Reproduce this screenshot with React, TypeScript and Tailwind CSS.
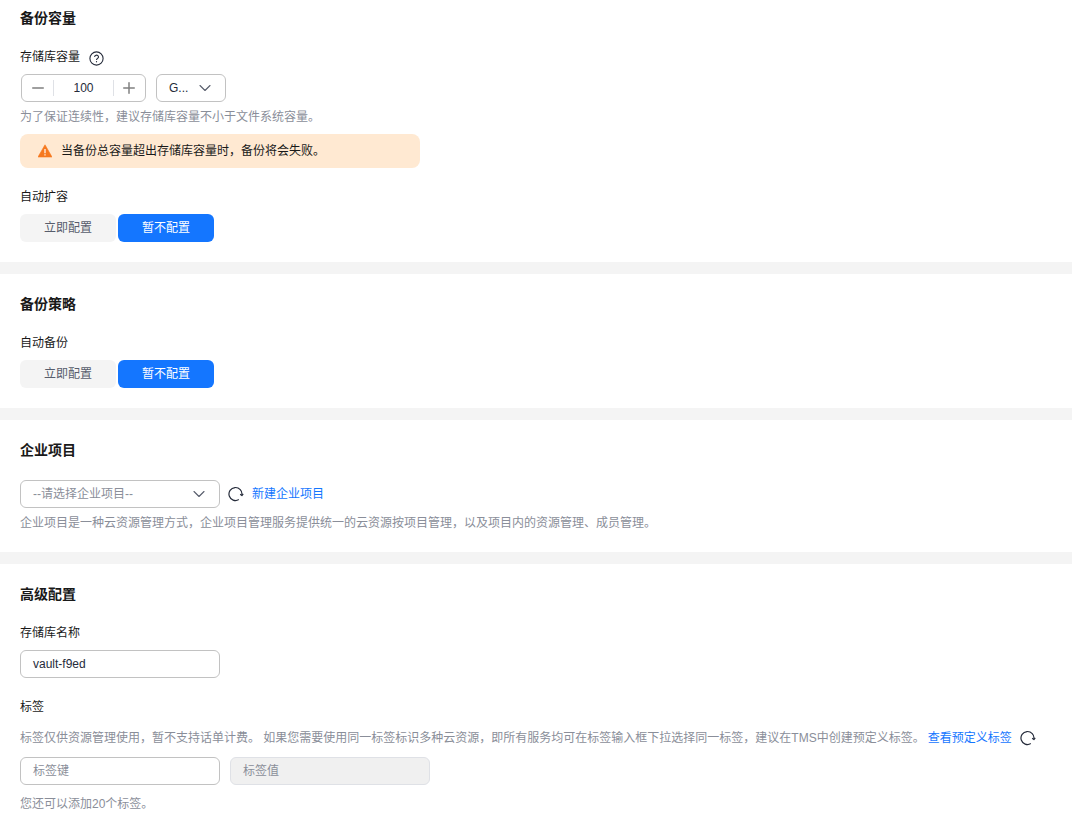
import { ChevronDown, Minus, Plus } from 'lucide-react';

const font = "font-['Liberation_Sans','Noto_Sans_CJK_SC',sans-serif]";

function Refresh() {
    return (
        <svg width="16" height="16" viewBox="0 0 16 16" fill="none" stroke="#252b3a" strokeWidth="1.2" className="shrink-0">
            <path d="M10.8 13.6A6.5 6.5 0 1 1 13.9 9" />
            <path d="M15.2 7.8 13.9 9.6 12.2 8.2" strokeLinejoin="round" />
        </svg>
    );
}

function ConfigToggle() {
    return (
        <div className="flex gap-0.5 h-7 text-xs">
            <div className="w-24 rounded-md bg-[#f4f4f4] text-[#575d6c] flex items-center justify-center">立即配置</div>
            <div className="w-24 rounded-md bg-[#1476ff] text-white flex items-center justify-center">暂不配置</div>
        </div>
    );
}

function SectionTitle({ children }: { children: string }) {
    return <h2 className="text-sm leading-5 font-bold text-[#191919]">{children}</h2>;
}

function Field({ className, children }: { className: string; children: string }) {
    return (
        <div className={`w-[200px] h-7 rounded-md px-3 flex items-center text-xs ${className}`}>{children}</div>
    );
}

export default function App() {
    return (
        <div className={`${font} w-[1072px] h-[829px] overflow-hidden bg-[#f4f4f4] flex flex-col gap-3 text-xs text-[#191919]`}>
            {/* 备份容量 */}
            <section className="bg-white h-[262px] px-5 pt-2">
                <SectionTitle>备份容量</SectionTitle>
                <div className="mt-[21px] flex items-center h-4 gap-[9px]">
                    <span>存储库容量</span>
                    <svg width="15" height="15" viewBox="0 0 15 15" fill="none" stroke="#252b3a" strokeWidth="1.1" className="mt-0.5">
                        <circle cx="7.5" cy="7.5" r="6.6" />
                        <path d="M5.6 6c0-2.5 3.9-2.5 3.9-.1 0 1.4-2 1.5-2 3.1" />
                        <path d="M7.5 10.1v1.2" />
                    </svg>
                </div>
                <div className="mt-[9px] flex">
                    <div className="ml-px w-[125px] h-7 rounded-md border border-[#c2c2c2] flex items-center">
                        <div className="w-[32px] h-4 border-r border-[#dfe1e6] flex items-center justify-center">
                            <Minus size={18} strokeWidth={2} color="#808080" />
                        </div>
                        <div className="flex-1 text-center text-[#252b3a]">100</div>
                        <div className="w-[32px] h-4 border-l border-[#dfe1e6] pr-0.5 flex items-center justify-center">
                            <Plus size={18} strokeWidth={2} color="#808080" />
                        </div>
                    </div>
                    <div className="ml-2.5 w-[70px] h-7 rounded-md border border-[#c2c2c2] pl-3 pr-2.5 flex items-center justify-between text-[#252b3a]">
                        <span>G...</span>
                        <ChevronDown size={20} strokeWidth={1.3} color="#575d6c" />
                    </div>
                </div>
                <p className="mt-[7px] leading-4 text-[#8a8e99]">为了保证连续性，建议存储库容量不小于文件系统容量。</p>
                <div className="mt-[9px] w-[400px] h-[34px] rounded-lg bg-[#ffe9d2] pl-[18px] flex items-center gap-[9px]">
                    <svg width="14" height="14" viewBox="0 0 14 14">
                        <path d="M7 .8 14 13H0Z" fill="#f6791f" stroke="#f6791f" strokeLinejoin="round" strokeWidth="0.6" />
                        <path d="M7 5v4.2M7 10.2v1.2" stroke="#fff" strokeWidth="1.2" />
                    </svg>
                    <span>当备份总容量超出存储库容量时，备份将会失败。</span>
                </div>
                <div className="mt-[21px] leading-4">自动扩容</div>
                <div className="mt-[9px]">
                    <ConfigToggle />
                </div>
            </section>

            {/* 备份策略 */}
            <section className="bg-white h-[134px] px-5 pt-5">
                <SectionTitle>备份策略</SectionTitle>
                <div className="mt-[21px] leading-4">自动备份</div>
                <div className="mt-[9px]">
                    <ConfigToggle />
                </div>
            </section>

            {/* 企业项目 */}
            <section className="bg-white h-[132px] px-5 pt-5">
                <SectionTitle>企业项目</SectionTitle>
                <div className="mt-5 flex items-center">
                    <div className="w-[200px] h-7 rounded-md border border-[#c2c2c2] pl-3 pr-2.5 flex items-center justify-between text-[#8a8e99]">
                        <span>--请选择企业项目--</span>
                        <ChevronDown size={20} strokeWidth={1.3} color="#575d6c" />
                    </div>
                    <div className="ml-2">
                        <Refresh />
                    </div>
                    <span className="ml-2 text-[#1476ff]">新建企业项目</span>
                </div>
                <p className="mt-[7px] leading-4 text-[#8a8e99]">
                    企业项目是一种云资源管理方式，企业项目管理服务提供统一的云资源按项目管理，以及项目内的资源管理、成员管理。
                </p>
            </section>

            {/* 高级配置 */}
            <section className="bg-white flex-1 px-5 pt-5">
                <SectionTitle>高级配置</SectionTitle>
                <div className="mt-[21px] leading-4">存储库名称</div>
                <div className="mt-[9px]">
                    <Field className="border border-[#c2c2c2] text-[#252b3a]">vault-f9ed</Field>
                </div>
                <div className="mt-[21px] leading-4">标签</div>
                <div className="mt-[10px] h-[25px] flex items-center whitespace-nowrap text-[#8a8e99]">
                    <span>标签仅供资源管理使用，暂不支持话单计费。 如果您需要使用同一标签标识多种云资源，即所有服务均可在标签输入框下拉选择同一标签，建议在TMS中创建预定义标签。</span>
                    <span className="ml-[3px] text-[#1476ff]">查看预定义标签</span>
                    <div className="ml-2">
                        <Refresh />
                    </div>
                </div>
                <div className="mt-[7px] flex gap-2.5">
                    <Field className="border border-[#c2c2c2] text-[#8a8e99]">标签键</Field>
                    <Field className="border border-[#dfe1e6] bg-[#f0f0f0] text-[#8a8e99]">标签值</Field>
                </div>
                <p className="mt-[11px] leading-4 text-[#8a8e99]">您还可以添加20个标签。</p>
            </section>
        </div>
    );
}
